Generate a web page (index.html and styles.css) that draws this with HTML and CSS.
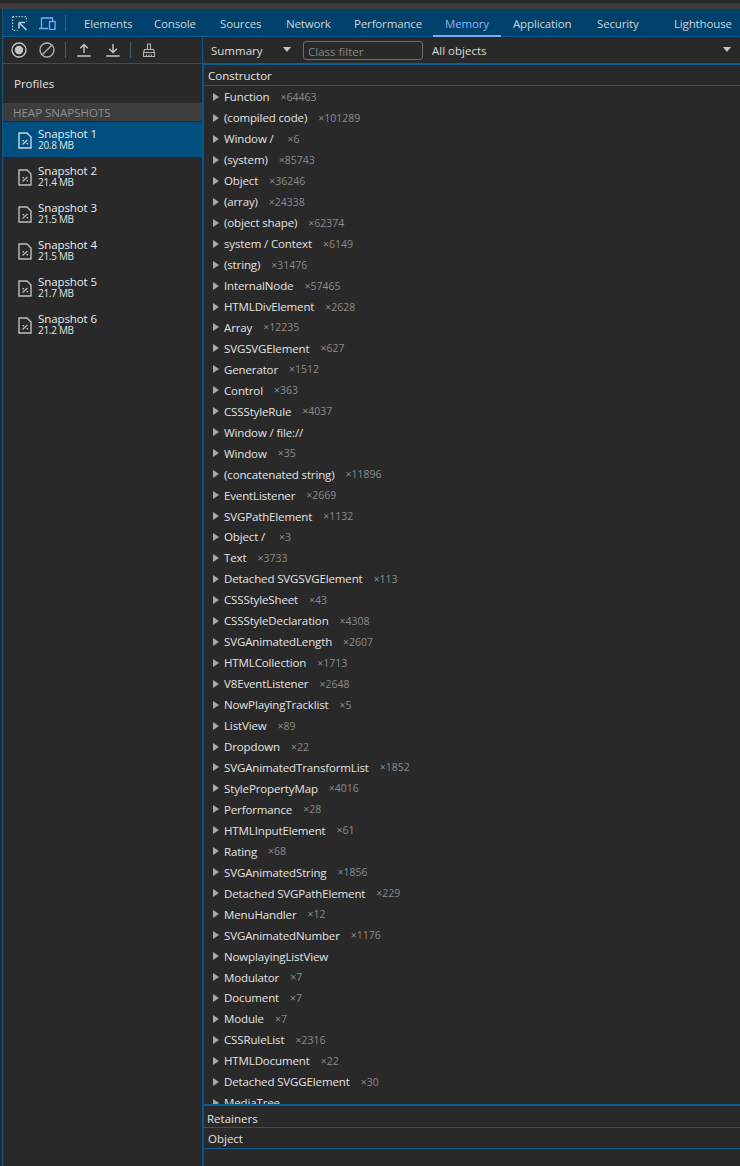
FILE: index.html
```html
<!DOCTYPE html>
<html lang="en">
<head>
<meta charset="utf-8">
<title>Memory</title>
<link rel="stylesheet" href="styles.css">
</head>
<body>
<div class="topstrip"></div>
<div class="app">
  <nav class="tabbar">
    <span class="tool-icon first"><svg width="16" height="15" viewBox="0 0 16 15" fill="none" stroke="#b9c6d0" stroke-width="1.2"><path d="M.6.6h13.800v5M.6.600v13.800h5" stroke-dasharray="1.500 1.500"/><path d="M7 6.500v6M7 6.500h6M7 6.500l7.500 7.500" stroke-width="1.700"/></svg></span>
    <span class="tool-icon"><svg width="17" height="13" viewBox="0 0 17 13" fill="none" stroke="#7cacf8" stroke-width="1.300"><path d="M0 11.500h9M2.500 11.500V1h11v3"/><rect x="10.500" y="4.500" width="5.500" height="8"/></svg></span>
    <span class="sep tabsep"></span>
    <div class="tabs">
      <span class="tab">Elements</span><span class="tab">Console</span><span class="tab">Sources</span><span class="tab">Network</span><span class="tab">Performance</span><span class="tab active">Memory</span><span class="tab">Application</span><span class="tab">Security</span><span class="tab">Lighthouse</span>
    </div>
  </nav>
  <div class="main">
    <aside class="side">
      <div class="side-tools">
        <svg class="st rec" width="16" height="16" viewBox="0 0 16 16"><circle cx="8" cy="8" r="7" fill="none" stroke="#c4c7c9" stroke-width="1.300"/><circle cx="8" cy="8" r="4.200" fill="#c4c7c9"/></svg>
        <svg class="st clr" width="16" height="16" viewBox="0 0 16 16" fill="none" stroke="#b0b3b5" stroke-width="1.300"><circle cx="8" cy="8" r="7"/><path d="M3.200 12.800l9.600-9.600"/></svg>
        <span class="sep s1"></span>
        <svg class="st up" width="14" height="14" viewBox="0 0 14 14" fill="none" stroke="#c4c7c9" stroke-width="1.400"><path d="M7 10V1.500M3.200 5.300L7 1.500l3.800 3.800M1 12.200v.800h12v-.800"/></svg>
        <svg class="st down" width="14" height="14" viewBox="0 0 14 14" fill="none" stroke="#c4c7c9" stroke-width="1.400"><path d="M7 1v8.500M3.200 5.700L7 9.500l3.800-3.800M1 12.200v.800h12v-.800"/></svg>
        <span class="sep s2"></span>
        <svg class="st brush" width="14" height="14" viewBox="0 0 14 14" fill="none" stroke="#b0b3b5" stroke-width="1.100"><path d="M5.500 6V1h3v5M2.500 6.500h9l1 3h-11zM1.500 9.500v4h11v-4M4.500 13.500v-2M7 13.500v-2M9.500 13.500v-2"/></svg>
      </div>
      <div class="profiles">Profiles</div>
      <div class="heap">HEAP SNAPSHOTS</div>
      <div class="snap selected"><svg class="fi" width="14" height="17" viewBox="0 0 14 17" fill="none" stroke="currentColor" stroke-width="1.400"><path d="M1 1h8l4 4v11H1z"/><path d="M4.500 12.500l5-4.500" stroke-width="1.200"/><path d="M4.500 8.500h1v1M8.500 11.500h1v1" stroke-width="1.200"/></svg><div class="snap-t"><div class="nm">Snapshot 1</div><div class="sz">20.8 MB</div></div></div>
      <div class="snap"><svg class="fi" width="14" height="17" viewBox="0 0 14 17" fill="none" stroke="currentColor" stroke-width="1.400"><path d="M1 1h8l4 4v11H1z"/><path d="M4.500 12.500l5-4.500" stroke-width="1.200"/><path d="M4.500 8.500h1v1M8.500 11.500h1v1" stroke-width="1.200"/></svg><div class="snap-t"><div class="nm">Snapshot 2</div><div class="sz">21.4 MB</div></div></div>
      <div class="snap"><svg class="fi" width="14" height="17" viewBox="0 0 14 17" fill="none" stroke="currentColor" stroke-width="1.400"><path d="M1 1h8l4 4v11H1z"/><path d="M4.500 12.500l5-4.500" stroke-width="1.200"/><path d="M4.500 8.500h1v1M8.500 11.500h1v1" stroke-width="1.200"/></svg><div class="snap-t"><div class="nm">Snapshot 3</div><div class="sz">21.5 MB</div></div></div>
      <div class="snap"><svg class="fi" width="14" height="17" viewBox="0 0 14 17" fill="none" stroke="currentColor" stroke-width="1.400"><path d="M1 1h8l4 4v11H1z"/><path d="M4.500 12.500l5-4.500" stroke-width="1.200"/><path d="M4.500 8.500h1v1M8.500 11.500h1v1" stroke-width="1.200"/></svg><div class="snap-t"><div class="nm">Snapshot 4</div><div class="sz">21.5 MB</div></div></div>
      <div class="snap"><svg class="fi" width="14" height="17" viewBox="0 0 14 17" fill="none" stroke="currentColor" stroke-width="1.400"><path d="M1 1h8l4 4v11H1z"/><path d="M4.500 12.500l5-4.500" stroke-width="1.200"/><path d="M4.500 8.500h1v1M8.500 11.500h1v1" stroke-width="1.200"/></svg><div class="snap-t"><div class="nm">Snapshot 5</div><div class="sz">21.7 MB</div></div></div>
      <div class="snap"><svg class="fi" width="14" height="17" viewBox="0 0 14 17" fill="none" stroke="currentColor" stroke-width="1.400"><path d="M1 1h8l4 4v11H1z"/><path d="M4.500 12.500l5-4.500" stroke-width="1.200"/><path d="M4.500 8.500h1v1M8.500 11.500h1v1" stroke-width="1.200"/></svg><div class="snap-t"><div class="nm">Snapshot 6</div><div class="sz">21.2 MB</div></div></div>
    </aside>
    <section class="content">
      <div class="filters">
        <span class="f-sum">Summary</span><span class="tri"></span>
        <span class="f-input">Class filter</span>
        <span class="f-all">All objects</span><span class="tri right"></span>
      </div>
      <div class="table">
        <div class="thead">Constructor</div>
        <div class="rows">
          <div class="r"><i></i><b>Function</b><u>×64463</u></div>
          <div class="r"><i></i><b>(compiled code)</b><u>×101289</u></div>
          <div class="r"><i></i><b>Window /&nbsp;</b><u>×6</u></div>
          <div class="r"><i></i><b>(system)</b><u>×85743</u></div>
          <div class="r"><i></i><b>Object</b><u>×36246</u></div>
          <div class="r"><i></i><b>(array)</b><u>×24338</u></div>
          <div class="r"><i></i><b>(object shape)</b><u>×62374</u></div>
          <div class="r"><i></i><b>system / Context</b><u>×6149</u></div>
          <div class="r"><i></i><b>(string)</b><u>×31476</u></div>
          <div class="r"><i></i><b>InternalNode</b><u>×57465</u></div>
          <div class="r"><i></i><b>HTMLDivElement</b><u>×2628</u></div>
          <div class="r"><i></i><b>Array</b><u>×12235</u></div>
          <div class="r"><i></i><b>SVGSVGElement</b><u>×627</u></div>
          <div class="r"><i></i><b>Generator</b><u>×1512</u></div>
          <div class="r"><i></i><b>Control</b><u>×363</u></div>
          <div class="r"><i></i><b>CSSStyleRule</b><u>×4037</u></div>
          <div class="r"><i></i><b>Window / file://</b></div>
          <div class="r"><i></i><b>Window</b><u>×35</u></div>
          <div class="r"><i></i><b>(concatenated string)</b><u>×11896</u></div>
          <div class="r"><i></i><b>EventListener</b><u>×2669</u></div>
          <div class="r"><i></i><b>SVGPathElement</b><u>×1132</u></div>
          <div class="r"><i></i><b>Object /&nbsp;</b><u>×3</u></div>
          <div class="r"><i></i><b>Text</b><u>×3733</u></div>
          <div class="r"><i></i><b>Detached SVGSVGElement</b><u>×113</u></div>
          <div class="r"><i></i><b>CSSStyleSheet</b><u>×43</u></div>
          <div class="r"><i></i><b>CSSStyleDeclaration</b><u>×4308</u></div>
          <div class="r"><i></i><b>SVGAnimatedLength</b><u>×2607</u></div>
          <div class="r"><i></i><b>HTMLCollection</b><u>×1713</u></div>
          <div class="r"><i></i><b>V8EventListener</b><u>×2648</u></div>
          <div class="r"><i></i><b>NowPlayingTracklist</b><u>×5</u></div>
          <div class="r"><i></i><b>ListView</b><u>×89</u></div>
          <div class="r"><i></i><b>Dropdown</b><u>×22</u></div>
          <div class="r"><i></i><b>SVGAnimatedTransformList</b><u>×1852</u></div>
          <div class="r"><i></i><b>StylePropertyMap</b><u>×4016</u></div>
          <div class="r"><i></i><b>Performance</b><u>×28</u></div>
          <div class="r"><i></i><b>HTMLInputElement</b><u>×61</u></div>
          <div class="r"><i></i><b>Rating</b><u>×68</u></div>
          <div class="r"><i></i><b>SVGAnimatedString</b><u>×1856</u></div>
          <div class="r"><i></i><b>Detached SVGPathElement</b><u>×229</u></div>
          <div class="r"><i></i><b>MenuHandler</b><u>×12</u></div>
          <div class="r"><i></i><b>SVGAnimatedNumber</b><u>×1176</u></div>
          <div class="r"><i></i><b>NowplayingListView</b></div>
          <div class="r"><i></i><b>Modulator</b><u>×7</u></div>
          <div class="r"><i></i><b>Document</b><u>×7</u></div>
          <div class="r"><i></i><b>Module</b><u>×7</u></div>
          <div class="r"><i></i><b>CSSRuleList</b><u>×2316</u></div>
          <div class="r"><i></i><b>HTMLDocument</b><u>×22</u></div>
          <div class="r"><i></i><b>Detached SVGGElement</b><u>×30</u></div>
          <div class="r"><i></i><b>MediaTree</b></div>
        </div>
        <div class="retainers">Retainers</div>
        <div class="objhead">Object</div>
        <div class="bottom"></div>
      </div>
    </section>
  </div>
</div>
</body>
</html>
```
FILE: styles.css
```css
* { box-sizing: border-box; }
html, body { margin: 0; height: 100%; overflow: hidden; }
body {
  background: #292929;
  font-family: "Open Sans", "Liberation Sans", sans-serif;
  font-size: 11.5px;
  color: #e3e3e3;
  display: flex;
  flex-direction: column;
  height: 1166px;
}
.topstrip { height: 9px; flex: none; background: linear-gradient(#292929 0 3px, #3c3c3c 3px); }
.app { flex: 1; display: flex; flex-direction: column; min-height: 0; margin-left: 2px; border-left: 1px solid #00598f; }
.tabbar {
  height: 28px; flex: none; display: flex; align-items: center;
  background: #00426b; border-top: 1px solid #1f3a4d; border-bottom: 1px solid #0a5f92;
}
.tool-icon { display: flex; flex: none; }
.tool-icon.first { margin-left: 9px; margin-right: 11px; }
.sep { width: 1px; height: 16px; background: #4a5d6c; flex: none; }
.tabsep { margin-left: 9px; }
.tabs {
  display: grid;
  grid-template-columns: 70px 66px 66px 68px 91px 68px 84px 77px 78px;
  height: 100%;
  margin-left: 6px;
}
.tab { padding-left: 12px; color: #c9d4dc; line-height: 28px; letter-spacing: -0.15px; white-space: nowrap; }
.tab.active { color: #8ab4f8; border-bottom: 2px solid #7cacf8; height: 27px; }
.main { flex: 1; display: flex; min-height: 0; }
.side { width: 200px; flex: none; border-right: 1px solid #00598f; display: flex; flex-direction: column; }
.side-tools { height: 27px; flex: none; display: flex; align-items: center; border-bottom: 1px solid #0a5f92; padding-left: 8px; }
.st { flex: none; }
.clr { margin-left: 12px; }
.s1 { margin-left: 10px; }
.up { margin-left: 11px; }
.down { margin-left: 15px; }
.s2 { margin-left: 10px; }
.brush { margin-left: 11px; }
.profiles { height: 39px; line-height: 40px; padding-left: 11px; flex: none; color: #e3e3e3; }
.heap { height: 18px; line-height: 20px; background: #3d3d3d; color: #8f8f8f; padding-left: 10px; flex: none; margin-bottom: 1px; }
.snap { height: 35px; margin-bottom: 2px; display: flex; align-items: center; flex: none; padding-left: 15px; color: #bdbdbd; }
.snap.selected { background: #004f7e; color: #c7d8e3; }
.fi { flex: none; margin-top: 2px; }
.snap-t { margin: -2px 0 0 6px; display: flex; flex-direction: column; }
.nm { color: #e8eef2; line-height: 13px; letter-spacing: -0.1px; }
.sz { color: #e3e3e3; font-size: 10px; line-height: 11px; letter-spacing: -0.3px; }
.content { flex: 1; min-width: 0; display: flex; flex-direction: column; }
.filters { height: 28px; flex: none; display: flex; align-items: center; border-bottom: 2px solid #0a5f92; padding: 1px 0 0 8px; }
.f-sum { width: 72px; color: #dcdcdc; }
.tri { width: 0; height: 0; flex: none; border-left: 4px solid transparent; border-right: 4px solid transparent; border-top: 5px solid #c7c7c7; margin-top: -2px; }
.tri.right { margin-left: auto; margin-right: 9px; }
.f-input { margin-left: 12px; width: 120px; height: 19px; border: 1px solid #6e6e6e; border-radius: 3px; color: #858585; line-height: 19px; padding-left: 4px; flex: none; }
.f-all { margin-left: 9px; color: #dcdcdc; }
.table { flex: 1; min-height: 0; display: flex; flex-direction: column; border-left: 1px solid #00598f; }
.thead { height: 21px; line-height: 22px; flex: none; padding-left: 4px; border-bottom: 1px solid #0a5f92; color: #e3e3e3; }
.rows { flex: 1; min-height: 0; overflow: hidden; padding-top: 0.5px; }
.r { height: 20.96px; display: flex; align-items: center; padding-left: 9px; }
.r i { width: 0; height: 0; flex: none; border-top: 4px solid transparent; border-bottom: 4px solid transparent; border-left: 6px solid #a8a8a8; margin-right: 5px; }
.r b { font-weight: 400; color: #e3e3e3; letter-spacing: -0.13px; }
.r u { text-decoration: none; color: #8b8b8b; font-size: 10.5px; margin-left: 11px; }
.retainers { height: 24px; line-height: 26px; flex: none; padding-left: 3px; border-top: 2px solid #0a5f92; border-bottom: 1px solid #0a5f92; }
.objhead { height: 21px; line-height: 22px; flex: none; padding-left: 4px; border-bottom: 1px solid #0a5f92; }
.bottom { height: 17px; flex: none; }
```
